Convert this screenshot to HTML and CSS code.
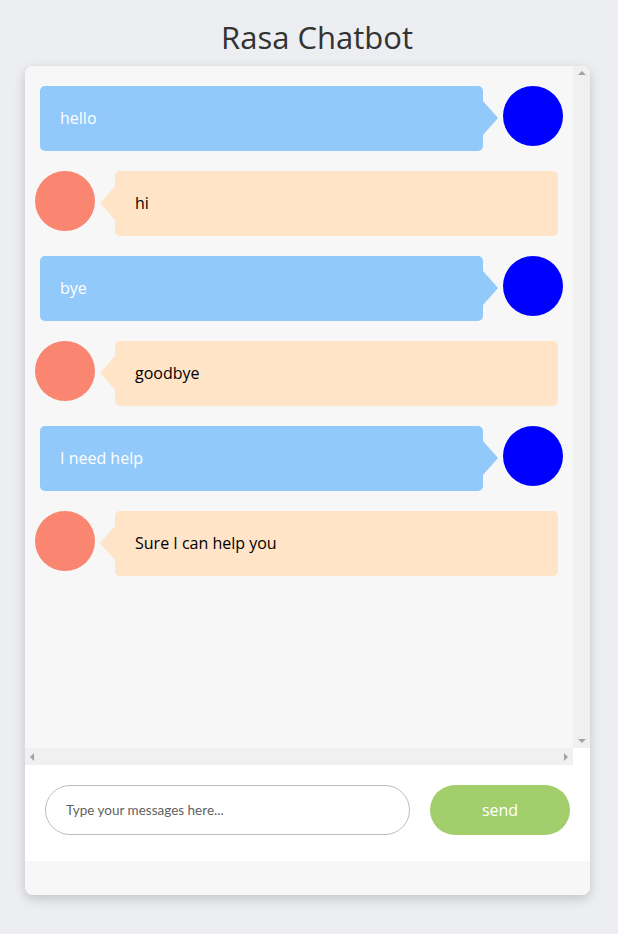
FILE: index.html
```html
<!DOCTYPE html>
<html lang="en">
<head>
<meta charset="utf-8">
<title>Rasa Chatbot</title>
<link rel="stylesheet" href="styles.css">
</head>
<body>
  <h1 class="title">Rasa Chatbot</h1>
  <div class="card">
    <div class="viewport">
      <div class="chat">
        <div class="row user">
          <div class="bubble">hello</div>
          <div class="avatar"></div>
        </div>
        <div class="row bot">
          <div class="avatar"></div>
          <div class="bubble">hi</div>
        </div>
        <div class="row user">
          <div class="bubble">bye</div>
          <div class="avatar"></div>
        </div>
        <div class="row bot">
          <div class="avatar"></div>
          <div class="bubble">goodbye</div>
        </div>
        <div class="row user">
          <div class="bubble">I need help</div>
          <div class="avatar"></div>
        </div>
        <div class="row bot">
          <div class="avatar"></div>
          <div class="bubble">Sure I can help you</div>
        </div>
      </div>
      <div class="vbar">
        <span class="arrow up"></span>
        <span class="arrow down"></span>
      </div>
      <div class="hbar">
        <span class="arrow left"></span>
        <span class="arrow right"></span>
      </div>
      <div class="corner"></div>
    </div>
    <div class="composer">
      <input class="msg-input" type="text" placeholder="Type your messages here..." autofocus>
      <button class="send" type="button">send</button>
    </div>
    <div class="card-foot"></div>
  </div>
</body>
</html>
```
FILE: styles.css
```css
html, body {
  margin: 0;
  padding: 0;
}
body {
  background: #eceef1;
  font-family: "Open Sans", "Noto Sans", sans-serif;
  height: 934px;
}
.title {
  margin: 16px 0 8px;
  padding-left: 16px;
  font-size: 31px;
  line-height: 42px;
  font-weight: 400;
  text-align: center;
  color: #333;
}
.card {
  width: 565px;
  margin-left: 25px;
  background: #f7f7f7;
  border-radius: 8px;
  overflow: hidden;
  box-shadow: 0 4px 12px rgba(0, 0, 0, 0.18);
}
.viewport {
  display: grid;
  grid-template-columns: 1fr 17px;
  grid-template-rows: 682px 17px;
}
.chat {
  box-sizing: border-box;
  padding-top: 20px;
  overflow: hidden;
  background: #f7f7f7;
}
.vbar {
  background: #f0f0f0;
  display: flex;
  flex-direction: column;
  justify-content: space-between;
  align-items: center;
  padding: 5px 0;
}
.hbar {
  background: #f0f0f0;
  display: flex;
  justify-content: space-between;
  align-items: center;
  padding: 0 5px;
}
.corner {
  background: #fff;
}
.arrow {
  width: 0;
  height: 0;
  display: block;
}
.arrow.up {
  border-left: 4px solid transparent;
  border-right: 4px solid transparent;
  border-bottom: 4px solid #a3a3a3;
}
.arrow.down {
  border-left: 4px solid transparent;
  border-right: 4px solid transparent;
  border-top: 4px solid #a3a3a3;
}
.arrow.left {
  border-top: 4px solid transparent;
  border-bottom: 4px solid transparent;
  border-right: 4px solid #a3a3a3;
}
.arrow.right {
  border-top: 4px solid transparent;
  border-bottom: 4px solid transparent;
  border-left: 4px solid #a3a3a3;
}
.row {
  display: flex;
  align-items: flex-start;
  gap: 20px;
  margin-bottom: 20px;
}
.row.user {
  padding: 0 10px 0 15px;
}
.row.bot {
  padding: 0 15px 0 10px;
}
.avatar {
  width: 60px;
  height: 60px;
  border-radius: 50%;
  flex: none;
}
.user .avatar {
  background: #0000ff;
}
.bot .avatar {
  background: #fa8570;
}
.bubble {
  position: relative;
  width: 443px;
  height: 65px;
  box-sizing: border-box;
  padding-left: 20px;
  padding-bottom: 1px;
  display: flex;
  align-items: center;
  border-radius: 5px;
  font-size: 16px;
}
.user .bubble {
  background: #92c9fb;
  color: #fff;
}
.bot .bubble {
  background: #ffe4c8;
  color: #000;
}
.bubble::after {
  content: "";
  position: absolute;
  top: 15px;
  border-top: 17px solid transparent;
  border-bottom: 17px solid transparent;
}
.user .bubble::after {
  left: 100%;
  border-left: 15px solid #92c9fb;
}
.bot .bubble::after {
  right: 100%;
  border-right: 15px solid #ffe4c8;
}
.composer {
  background: #fff;
  display: flex;
  gap: 20px;
  padding: 20px 20px 26px;
}
.msg-input {
  width: 365px;
  height: 50px;
  box-sizing: border-box;
  border: 1px solid #bdbdbd;
  border-radius: 25px;
  padding: 0 20px;
  font-family: "Lato", "Open Sans", sans-serif;
  font-size: 13.5px;
  outline: none;
  background: #fff;
  caret-color: #000;
}
.msg-input::placeholder {
  color: #5f5f5f;
}
.send {
  width: 140px;
  height: 50px;
  border: none;
  border-radius: 25px;
  background: #a2cf6c;
  color: #fff;
  font-family: "Open Sans", sans-serif;
  font-size: 16px;
}
.card-foot {
  height: 34px;
  background: #f7f7f7;
}
```
